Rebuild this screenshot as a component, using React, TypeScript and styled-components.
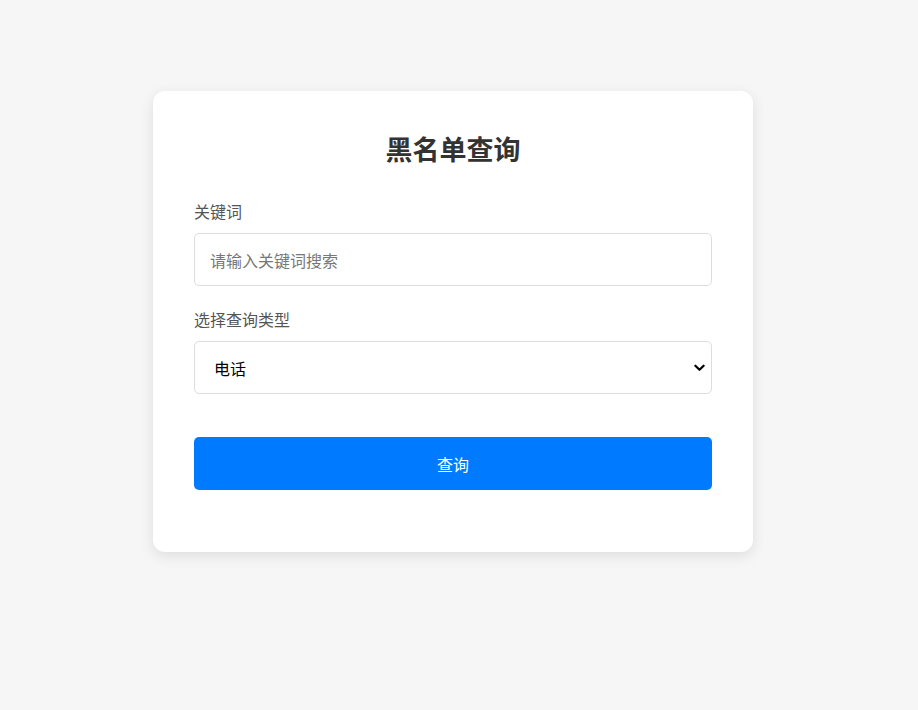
import styled, { createGlobalStyle } from 'styled-components';

const GlobalStyle = createGlobalStyle`
    html, body {
        margin: 0;
        padding: 0;
        background: #f6f6f6;
        font-family: "Noto Sans CJK SC", "Noto Sans", "Liberation Sans", sans-serif;
    }
`;

const App = () => {
    return (
        <Page>
            <GlobalStyle />
            <Card>
                <Title>黑名单查询</Title>
                <FormGroup>
                    <Label htmlFor="keyword">关键词</Label>
                    <TextInput id="keyword" type="text" placeholder="请输入关键词搜索" />
                </FormGroup>
                <FormGroup>
                    <Label htmlFor="type">选择查询类型</Label>
                    <SelectWrap>
                        <Select id="type" defaultValue="phone">
                            <option value="phone">电话</option>
                            <option value="name">姓名</option>
                            <option value="id">身份证</option>
                        </Select>
                        <Chevron viewBox="0 0 12 8" aria-hidden="true">
                            <path d="M1.5 1.5 L6 6 L10.5 1.5" />
                        </Chevron>
                    </SelectWrap>
                </FormGroup>
                <ButtonGroup>
                    <SubmitButton type="button">查询</SubmitButton>
                </ButtonGroup>
            </Card>
        </Page>
    );
};

const Page = styled.div`
    display: flex;
    justify-content: center;
    padding: 91px 12px 60px 0;
`;

const Card = styled.div`
    width: 600px;
    box-sizing: border-box;
    padding: 40px 41px;
    background: #fff;
    border-radius: 12px;
    box-shadow: 0 4px 14px rgba(0, 0, 0, 0.1);
`;

const Title = styled.h2`
    margin: 0 0 34px;
    text-align: center;
    font-size: 27px;
    line-height: 36px;
    font-weight: 700;
    color: #333;
`;

const FormGroup = styled.div`
    display: flex;
    flex-direction: column;
    margin-bottom: 23px;
`;

const Label = styled.label`
    font-size: 16px;
    line-height: 20px;
    color: #555;
    margin-bottom: 12px;
`;

const TextInput = styled.input`
    box-sizing: border-box;
    width: 100%;
    height: 53px;
    padding: 0 15px;
    font-family: inherit;
    font-size: 16px;
    color: #333;
    border: 1px solid #ddd;
    border-radius: 5px;
    outline: none;

    &::placeholder {
        color: #777;
    }
`;

const SelectWrap = styled.div`
    position: relative;
`;

const Select = styled.select`
    box-sizing: border-box;
    width: 100%;
    height: 53px;
    padding: 0 30px 0 19px;
    font-family: inherit;
    font-size: 16px;
    color: #000;
    background: #fff;
    border: 1px solid #ddd;
    border-radius: 5px;
    appearance: none;
    outline: none;
`;

const Chevron = styled.svg`
    position: absolute;
    right: 7px;
    top: 50%;
    width: 11px;
    height: 8px;
    margin-top: -4px;
    fill: none;
    stroke: #000;
    stroke-width: 2.4;
    stroke-linecap: round;
    stroke-linejoin: round;
    pointer-events: none;
`;

const ButtonGroup = styled.div`
    margin-top: 43px;
    margin-bottom: 22px;
`;

const SubmitButton = styled.button`
    width: 100%;
    height: 53px;
    border: none;
    border-radius: 5px;
    background: #007bff;
    color: #fff;
    font-family: inherit;
    font-size: 16px;
    cursor: pointer;
`;

export default App;
